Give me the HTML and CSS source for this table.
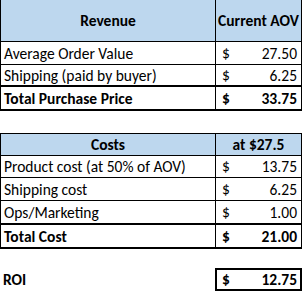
FILE: index.html
```html
<!DOCTYPE html>
<html>
<head>
<meta charset="utf-8">
<link rel="stylesheet" href="styles.css">
</head>
<body>
<div class="sheet">
  <div class="tbl tbl-rev">
    <div class="cell head head-tall label">Revenue</div>
    <div class="cell head head-tall val">Current AOV</div>

    <div class="cell h23 label">Average Order Value</div>
    <div class="cell h23 money"><span>$</span><span>27.50</span></div>

    <div class="cell label thick-b">Shipping (paid by buyer)</div>
    <div class="cell money thick-b"><span>$</span><span>6.25</span></div>

    <div class="cell h24 label bold thick-b">Total Purchase Price</div>
    <div class="cell h24 money bold thick-b"><span>$</span><span>33.75</span></div>
  </div>

  <div class="tbl tbl-cost">
    <div class="cell head label">Costs</div>
    <div class="cell head val">at $27.5</div>

    <div class="cell label">Product cost (at 50% of AOV)</div>
    <div class="cell money"><span>$</span><span>13.75</span></div>

    <div class="cell h23 label">Shipping cost</div>
    <div class="cell h23 money"><span>$</span><span>6.25</span></div>

    <div class="cell h24 label thick-b">Ops/Marketing</div>
    <div class="cell h24 money thick-b"><span>$</span><span>1.00</span></div>

    <div class="cell h24 label bold thick-b">Total Cost</div>
    <div class="cell h24 money bold thick-b"><span>$</span><span>21.00</span></div>
  </div>

  <div class="roi">
    <div class="roi-label">ROI</div>
    <div class="roi-box"><span>$</span><span>12.75</span></div>
  </div>
</div>
</body>
</html>
```

FILE: styles.css
```css
html, body {
  margin: 0;
  padding: 0;
  background: #ffffff;
}

body {
  font-family: "Carlito", "Calibri", "Lato", sans-serif;
  font-size: 15.5px;
  color: #000000;
  width: 302px;
}

.sheet {
  display: flex;
  flex-direction: column;
}

.tbl {
  display: grid;
  grid-template-columns: 215px 85px;
  border-left: 1px solid #000;
  border-right: 1px solid #000;
}

.tbl-cost {
  margin-top: 22px;
  border-top: 1px solid #000;
}

.cell {
  box-sizing: border-box;
  height: 22px;
  border-bottom: 1px solid #000;
  display: flex;
  align-items: center;
  white-space: nowrap;
  overflow: hidden;
}

.cell.h23 {
  height: 23px;
}

.cell.h24 {
  height: 24px;
}

.cell.label {
  border-right: 1px solid #000;
  padding-left: 3px;
}

.cell.thick-b {
  border-bottom-width: 2px;
}

.head {
  background: #bdd7ee;
  font-weight: bold;
  justify-content: center;
}

.head.label {
  padding-left: 0;
}

.cell.head-tall {
  height: 42px;
}

.bold {
  font-weight: bold;
}

.money {
  justify-content: space-between;
  padding-left: 6px;
  padding-right: 4px;
}

.roi {
  display: grid;
  grid-template-columns: 215px 87px;
  margin-top: 19px;
  font-weight: bold;
}

.roi-label {
  display: flex;
  align-items: center;
  padding-left: 3px;
}

.roi-box {
  box-sizing: border-box;
  height: 23px;
  border: 2px solid #000;
  display: flex;
  align-items: center;
  justify-content: space-between;
  padding-left: 5px;
  padding-right: 3px;
}
```
